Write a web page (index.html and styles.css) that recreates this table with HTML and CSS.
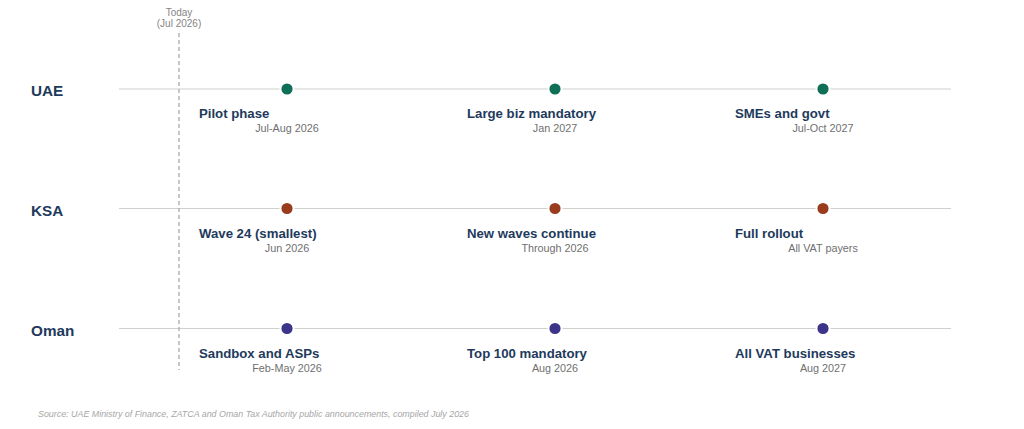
FILE: index.html
```html
<!DOCTYPE html>
<html lang="en">
<head>
<meta charset="utf-8">
<title>E-invoicing rollout timeline</title>
<link rel="stylesheet" href="styles.css">
</head>
<body>
<main class="page">
<svg class="chart" width="1024" height="429" viewBox="0 0 1024 429" xmlns="http://www.w3.org/2000/svg">
  <text class="today" x="179" y="15.5">Today</text>
  <text class="today" x="179" y="26.5">(Jul 2026)</text>

  <line class="track" x1="119" y1="89" x2="951" y2="89"/>
  <line class="track" x1="119" y1="208.5" x2="951" y2="208.5"/>
  <line class="track" x1="119" y1="328.5" x2="951" y2="328.5"/>

  <line class="today-line" x1="179" y1="33" x2="179" y2="370"/>

  <g class="row">
    <text class="country" x="31" y="96">UAE</text>
    <circle class="dot uae" cx="287" cy="89" r="6.6"/>
    <circle class="dot uae" cx="555" cy="89" r="6.6"/>
    <circle class="dot uae" cx="823" cy="89" r="6.6"/>
    <text class="title" x="199" y="118">Pilot phase</text>
    <text class="date" x="287" y="132">Jul-Aug 2026</text>
    <text class="title" x="467" y="118">Large biz mandatory</text>
    <text class="date" x="555" y="132">Jan 2027</text>
    <text class="title" x="735" y="118">SMEs and govt</text>
    <text class="date" x="823" y="132">Jul-Oct 2027</text>
  </g>

  <g class="row">
    <text class="country" x="31" y="215.5">KSA</text>
    <circle class="dot ksa" cx="287" cy="208.5" r="6.6"/>
    <circle class="dot ksa" cx="555" cy="208.5" r="6.6"/>
    <circle class="dot ksa" cx="823" cy="208.5" r="6.6"/>
    <text class="title" x="199" y="237.5">Wave 24 (smallest)</text>
    <text class="date" x="287" y="251.5">Jun 2026</text>
    <text class="title" x="467" y="237.5">New waves continue</text>
    <text class="date" x="555" y="251.5">Through 2026</text>
    <text class="title" x="735" y="237.5">Full rollout</text>
    <text class="date" x="823" y="251.5">All VAT payers</text>
  </g>

  <g class="row">
    <text class="country" x="31" y="335.5">Oman</text>
    <circle class="dot oman" cx="287" cy="328.5" r="6.6"/>
    <circle class="dot oman" cx="555" cy="328.5" r="6.6"/>
    <circle class="dot oman" cx="823" cy="328.5" r="6.6"/>
    <text class="title" x="199" y="357.5">Sandbox and ASPs</text>
    <text class="date" x="287" y="371.5">Feb-May 2026</text>
    <text class="title" x="467" y="357.5">Top 100 mandatory</text>
    <text class="date" x="555" y="371.5">Aug 2026</text>
    <text class="title" x="735" y="357.5">All VAT businesses</text>
    <text class="date" x="823" y="371.5">Aug 2027</text>
  </g>

  <text class="source" x="38" y="417">Source: UAE Ministry of Finance, ZATCA and Oman Tax Authority public announcements, compiled July 2026</text>
</svg>
</main>
</body>
</html>
```

FILE: styles.css
```css
html, body {
  margin: 0;
  padding: 0;
  background: #ffffff;
}

body {
  font-family: "Liberation Sans", Arial, sans-serif;
}

.page {
  width: 1024px;
  height: 429px;
  overflow: hidden;
}

.chart {
  display: block;
  font-family: "Liberation Sans", Arial, sans-serif;
}

.today {
  font-size: 10px;
  fill: #858585;
  text-anchor: middle;
}

.today-line {
  stroke: #b4b4b4;
  stroke-width: 1.5;
  stroke-dasharray: 4 3;
}

.track {
  stroke: #cfcfcb;
  stroke-width: 1.2;
}

.country {
  font-size: 15.3px;
  font-weight: 700;
  fill: #1e3a5c;
}

.dot {
  stroke: #ffffff;
  stroke-width: 2;
}

.dot.uae { fill: #0f6e56; }
.dot.ksa { fill: #993c1d; }
.dot.oman { fill: #3c3489; }

.title {
  font-size: 13.2px;
  font-weight: 700;
  fill: #1e3a5c;
}

.date {
  font-size: 10.8px;
  fill: #6f6f6f;
  text-anchor: middle;
}

.source {
  font-size: 8.9px;
  font-style: italic;
  fill: #a6a6a6;
}
```
